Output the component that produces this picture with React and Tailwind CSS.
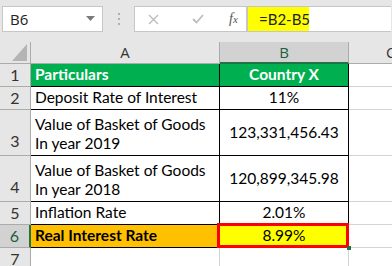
import React from "react";

const cellFont = { fontFamily: "Lato, 'Open Sans', sans-serif" };

function Cell({ className = "", children }) {
  return <div className={"flex border-r border-b " + className}>{children}</div>;
}

export default function App() {
  return (
    <div className="w-[392px] h-[266px] overflow-hidden bg-white relative" style={{ fontFamily: "'Open Sans', 'Noto Sans', sans-serif" }}>
      {/* Top formula bar */}
      <div className="h-[42px] bg-[#e6e6e6] flex items-start pt-[6px]">
        <div className="ml-[2px] w-[101px] h-[26px] bg-white border border-[#c6c6c6] flex items-center justify-between px-[7px]">
          <span className="text-[15px] text-[#222] leading-none">B6</span>
          <svg width="9" height="6" viewBox="0 0 9 6"><path d="M0 0 H9 L4.5 5 Z" fill="#7a7a7a" /></svg>
        </div>
        <div className="w-[31px] h-[26px] flex flex-col items-center justify-center gap-[3px]">
          <span className="w-[2px] h-[2px] bg-[#b0b0b0]" />
          <span className="w-[2px] h-[2px] bg-[#b0b0b0]" />
          <span className="w-[2px] h-[2px] bg-[#b0b0b0]" />
        </div>
        <div className="w-[113px] h-[26px] bg-white border border-[#c6c6c6] flex items-center">
          <svg className="ml-[13px]" width="11" height="11" viewBox="0 0 11 11"><path d="M1 1 L10 10 M10 1 L1 10" stroke="#bdbdbd" strokeWidth="1.4" /></svg>
          <svg className="ml-[33px]" width="12" height="10" viewBox="0 0 12 10"><path d="M1 5 L4.5 8.5 L11 1" stroke="#bdbdbd" strokeWidth="1.8" fill="none" /></svg>
          <span className="ml-[25px] text-[14px] italic text-[#555] leading-none" style={{ fontFamily: "'Liberation Serif', serif" }}>f<span className="text-[11px]">x</span></span>
        </div>
        <div className="flex-1 h-[26px] bg-white border-y border-l border-[#c6c6c6] mr-[1px] flex items-stretch">
          <div className="w-[61px] shrink-0 bg-[#ffff00] flex items-center pl-[11px] whitespace-nowrap">
            <span className="text-[15px] text-[#222] leading-none" style={cellFont}>=B2-B5</span>
          </div>
        </div>
      </div>

      {/* Grid */}
      <div className="grid grid-cols-[31px_189px_129px_1fr] grid-rows-[22px_23px_23px_46px_46px_23px_23px_23px] text-[15.5px]" style={cellFont}>
        {/* header row */}
        <Cell className="bg-[#e6e6e6] border-[#ababab] items-end justify-end pr-[3px] pb-[2px]">
          <svg width="15" height="17" viewBox="0 0 15 17"><path d="M15 0 V17 H0 Z" fill="#b4b4b4" /></svg>
        </Cell>
        <Cell className="bg-[#e6e6e6] border-[#ababab] items-center justify-center text-[15px] text-[#333]"><span style={{ fontFamily: "'Open Sans', sans-serif" }}>A</span></Cell>
        <div className="bg-[#d2d2d2] border-r border-[#ababab] border-b-2 border-b-[#217346] flex items-center justify-center text-[15px] text-[#1d5e3a]"><span style={{ fontFamily: "'Open Sans', sans-serif" }}>B</span></div>
        <Cell className="bg-[#e6e6e6] border-[#ababab] items-center pl-[37px] text-[15px] text-[#333]"><span style={{ fontFamily: "'Open Sans', sans-serif" }}>C</span></Cell>

        {/* row 1 */}
        <Cell className="bg-[#e6e6e6] border-[#ababab] items-center justify-center text-[16px] text-[#333]">1</Cell>
        <Cell className="bg-[#00b050] border-black items-center pl-[4px] font-bold text-white">Particulars</Cell>
        <Cell className="bg-[#00b050] border-black items-center justify-center font-bold text-white">Country X</Cell>
        <Cell className="border-[#d4d4d4]" />

        {/* row 2 */}
        <Cell className="bg-[#e6e6e6] border-[#ababab] items-center justify-center text-[16px] text-[#333]">2</Cell>
        <Cell className="border-black items-center pl-[4px] text-black whitespace-nowrap">Deposit Rate of Interest</Cell>
        <Cell className="border-black items-center justify-center text-black">11%</Cell>
        <Cell className="border-[#d4d4d4]" />

        {/* row 3 */}
        <Cell className="bg-[#e6e6e6] border-[#ababab] items-end justify-center pb-[2px] text-[16px] text-[#333]">3</Cell>
        <Cell className="border-black flex-col justify-end pl-[4px] pb-[2px] leading-[19px] text-black whitespace-nowrap"><span>Value of Basket of Goods</span><span>In year 2019</span></Cell>
        <Cell className="border-black items-center justify-center text-black">123,331,456.43</Cell>
        <Cell className="border-[#d4d4d4]" />

        {/* row 4 */}
        <Cell className="bg-[#e6e6e6] border-[#ababab] items-end justify-center pb-[2px] text-[16px] text-[#333]">4</Cell>
        <Cell className="border-black flex-col justify-end pl-[4px] pb-[2px] leading-[19px] text-black whitespace-nowrap"><span>Value of Basket of Goods</span><span>In year 2018</span></Cell>
        <Cell className="border-black items-center justify-center text-black">120,899,345.98</Cell>
        <Cell className="border-[#d4d4d4]" />

        {/* row 5 */}
        <Cell className="bg-[#e6e6e6] border-[#ababab] items-center justify-center text-[16px] text-[#333]">5</Cell>
        <Cell className="border-black items-center pl-[4px] text-black">Inflation Rate</Cell>
        <Cell className="border-black items-center justify-center text-black">2.01%</Cell>
        <Cell className="border-[#d4d4d4]" />

        {/* row 6 */}
        <div className="bg-[#d2d2d2] border-b border-[#ababab] border-r-2 border-r-[#217346] flex items-center justify-center text-[16px] text-[#1d5e3a]">6</div>
        <Cell className="bg-[#ffc000] border-black items-center pl-[4px] font-bold text-black">Real Interest Rate</Cell>
        <div className="relative bg-[#ffff00] border-r border-b border-black flex items-center justify-center text-black">
          8.99%
          <div className="absolute -left-[3px] -top-[2px] -right-[1px] -bottom-[1px] border-[3px] border-[#ff0000]" />
          <div className="absolute -right-[3px] -bottom-[3px] w-[4px] h-[4px] bg-[#217346]" />
        </div>
        <Cell className="border-[#d4d4d4]" />

        {/* row 7 */}
        <Cell className="bg-[#e6e6e6] border-[#ababab] items-center justify-center text-[16px] text-[#333]">7</Cell>
        <Cell className="border-[#d4d4d4]" />
        <Cell className="border-[#d4d4d4]" />
        <Cell className="border-[#d4d4d4]" />
      </div>
    </div>
  );
}
